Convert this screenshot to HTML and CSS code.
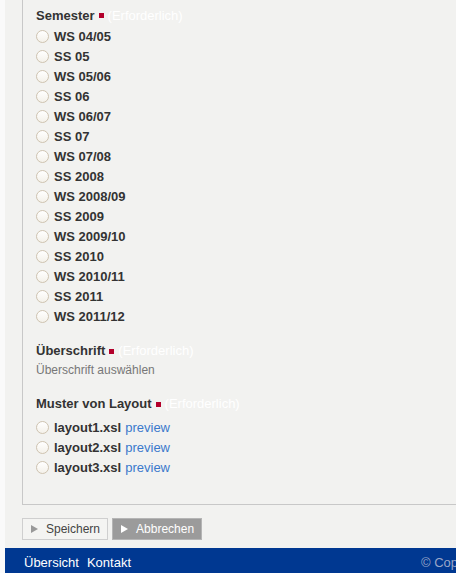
FILE: index.html
```html
<!DOCTYPE html>
<html lang="de">
<head>
<meta charset="utf-8">
<title>Formular</title>
<link rel="stylesheet" href="styles.css">
</head>
<body>
<div class="page">
  <div class="content">
    <div class="box">
      <div class="field-head"><span class="label">Semester</span><span class="req"></span><span class="req-text">(Erforderlich)</span></div>
      <ul class="options">
        <li class="opt"><span class="radio"></span><span class="opt-text">WS 04/05</span></li>
        <li class="opt"><span class="radio"></span><span class="opt-text">SS 05</span></li>
        <li class="opt"><span class="radio"></span><span class="opt-text">WS 05/06</span></li>
        <li class="opt"><span class="radio"></span><span class="opt-text">SS 06</span></li>
        <li class="opt"><span class="radio"></span><span class="opt-text">WS 06/07</span></li>
        <li class="opt"><span class="radio"></span><span class="opt-text">SS 07</span></li>
        <li class="opt"><span class="radio"></span><span class="opt-text">WS 07/08</span></li>
        <li class="opt"><span class="radio"></span><span class="opt-text">SS 2008</span></li>
        <li class="opt"><span class="radio"></span><span class="opt-text">WS 2008/09</span></li>
        <li class="opt"><span class="radio"></span><span class="opt-text">SS 2009</span></li>
        <li class="opt"><span class="radio"></span><span class="opt-text">WS 2009/10</span></li>
        <li class="opt"><span class="radio"></span><span class="opt-text">SS 2010</span></li>
        <li class="opt"><span class="radio"></span><span class="opt-text">WS 2010/11</span></li>
        <li class="opt"><span class="radio"></span><span class="opt-text">SS 2011</span></li>
        <li class="opt"><span class="radio"></span><span class="opt-text">WS 2011/12</span></li>
      </ul>

      <div class="field-head head-2"><span class="label">Überschrift</span><span class="req"></span><span class="req-text">(Erforderlich)</span></div>
      <div class="hint">Überschrift auswählen</div>

      <div class="field-head head-3"><span class="label">Muster von Layout</span><span class="req"></span><span class="req-text">(Erforderlich)</span></div>
      <ul class="options options-layout">
        <li class="opt"><span class="radio"></span><span class="opt-text">layout1.xsl</span><a class="preview" href="#">preview</a></li>
        <li class="opt"><span class="radio"></span><span class="opt-text">layout2.xsl</span><a class="preview" href="#">preview</a></li>
        <li class="opt"><span class="radio"></span><span class="opt-text">layout3.xsl</span><a class="preview" href="#">preview</a></li>
      </ul>
    </div>

    <div class="actions">
      <button class="btn btn-save" type="button"><span class="tri"></span>Speichern</button>
      <button class="btn btn-cancel" type="button"><span class="tri"></span>Abbrechen</button>
    </div>
  </div>

  <footer class="footer">
    <nav class="footer-nav"><a href="#">Übersicht</a><a href="#">Kontakt</a></nav>
    <span class="copy">© Copyright</span>
  </footer>
</div>
</body>
</html>
```

FILE: styles.css
```css
html, body {
  margin: 0;
  padding: 0;
  background: #fafafa;
  overflow: hidden;
}

body {
  font-family: "Liberation Sans", Arial, sans-serif;
  color: #333;
}

.page {
  margin-left: 5px;
  background: #f2f2f0;
  min-height: 573px;
}

.content {
  padding-left: 17px;
}

.box {
  border-left: 1px solid #c8c8c8;
  border-bottom: 1px solid #c8c8c8;
  padding: 5px 0 26px 13px;
}

.field-head {
  display: flex;
  align-items: center;
  height: 20px;
  font-size: 13px;
  margin-bottom: 1px;
}

.label {
  font-weight: bold;
  color: #333;
}

.req {
  width: 5px;
  height: 5px;
  background: #b3002b;
  margin: 1px 4px 0 4px;
}

.req-text {
  color: #fff;
}

.head-2 {
  margin-top: 14px;
  margin-bottom: 0;
}

.head-3 {
  margin-top: 15px;
  margin-bottom: 4px;
}

.hint {
  font-size: 12px;
  line-height: 18px;
  color: #777;
}

.options {
  list-style: none;
  margin: 0;
  padding: 0;
}

.opt {
  display: flex;
  align-items: center;
  height: 20.07px;
  font-size: 13px;
}

.options-layout .opt {
  height: 20px;
}

.radio {
  box-sizing: border-box;
  width: 13px;
  height: 13px;
  border: 1px solid #cec3b0;
  border-radius: 50%;
  background: linear-gradient(#ffffff, #f4f1ea);
  margin: 0 5px 0 0;
}

.opt-text {
  font-weight: bold;
  color: #333;
}

.preview {
  margin-left: 4px;
  color: #3b79cc;
  text-decoration: none;
}

.actions {
  display: flex;
  gap: 4px;
  margin-top: 13px;
}

.btn {
  box-sizing: border-box;
  display: flex;
  align-items: center;
  height: 22px;
  padding: 0 7px 0 8px;
  font-family: "Liberation Sans", Arial, sans-serif;
  font-size: 12px;
  border: 1px solid #cfcfcf;
  background: #f4f4f2;
  color: #444;
  cursor: pointer;
}

.tri {
  width: 0;
  height: 0;
  border-left: 7px solid #999;
  border-top: 4px solid transparent;
  border-bottom: 4px solid transparent;
  margin-right: 8px;
}

.btn-cancel {
  background: #9b9b9b;
  border-color: #b5b5b5;
  color: #fff;
}

.btn-cancel .tri {
  border-left-color: #fff;
}

.footer {
  display: flex;
  align-items: flex-start;
  box-sizing: border-box;
  height: 26px;
  padding-top: 6px;
  line-height: 18px;
  margin-top: 8px;
  background: #003891;
  font-size: 13px;
  white-space: nowrap;
  overflow: hidden;
}

.footer-nav {
  display: flex;
  gap: 8px;
  padding-left: 19px;
}

.footer-nav a {
  color: #fff;
  text-decoration: none;
}

.copy {
  margin-left: 290px;
  color: #9aa6c8;
}
```
